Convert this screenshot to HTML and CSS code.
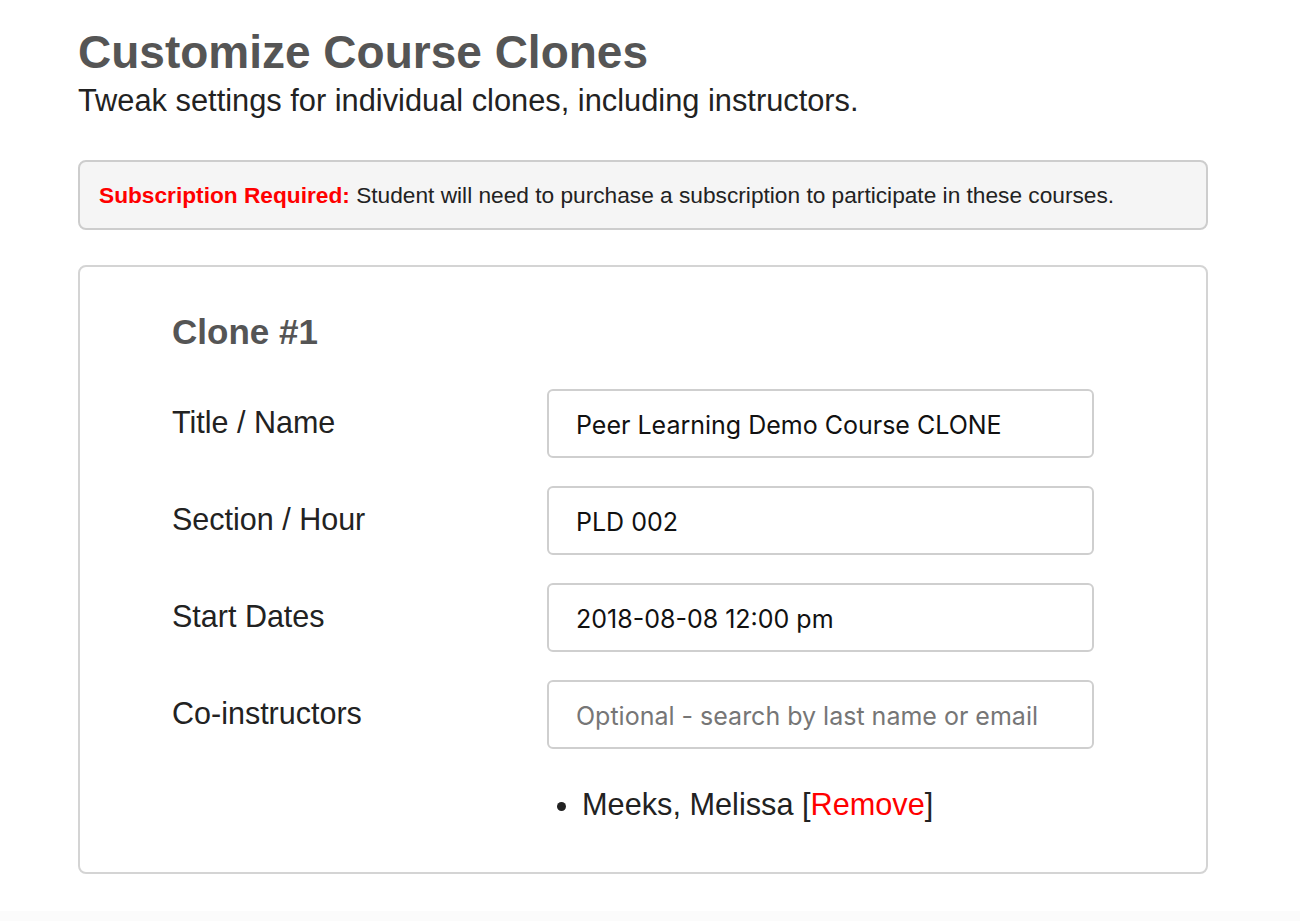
FILE: index.html
```html
<!DOCTYPE html>
<html lang="en">
<head>
    <meta charset="UTF-8">
    <meta name="viewport" content="width=device-width, initial-scale=1.0">
    <title>Customize Course Clones</title>
    <link rel="stylesheet" href="styles.css">
</head>
<body>

    <div class="page">
        <h1>Customize Course Clones</h1>
        <p class="lead">Tweak settings for individual clones, including instructors.</p>

        <div class="notice">
            <strong>Subscription Required:</strong> Student will need to purchase a subscription to participate in these courses.
        </div>

        <div class="clone">
            <h2>Clone #1</h2>

            <div class="row">
                <label for="title">Title / Name</label>
                <input type="text" id="title" value="Peer Learning Demo Course CLONE">
            </div>
            <div class="row">
                <label for="section">Section / Hour</label>
                <input type="text" id="section" value="PLD 002">
            </div>
            <div class="row">
                <label for="start">Start Dates</label>
                <input type="text" id="start" value="2018-08-08 12:00 pm">
            </div>
            <div class="row">
                <label for="coinst">Co-instructors</label>
                <input type="text" id="coinst" placeholder="Optional - search by last name or email">
            </div>

            <ul class="instructors">
                <li>Meeks, Melissa [<a href="#">Remove</a>]</li>
            </ul>
        </div>
    </div>

    <div class="footer"></div>

</body>
</html>
```

FILE: styles.css
```css
body {
    margin: 0;
    font-family: "Liberation Sans", Arial, sans-serif;
    background-color: #fff;
    color: #222;
}
.page {
    width: 1130px;
    padding: 29px 0 0 78px;
}
h1 {
    margin: 0;
    font-size: 46px;
    line-height: 1;
    font-weight: bold;
    color: #555;
}
.lead {
    margin: 11px 0 0;
    font-size: 30.8px;
    line-height: 1;
    color: #222;
}
.notice {
    margin-top: 43px;
    padding: 22px 19px 21px;
    background-color: #f5f5f5;
    border: 2px solid #cdcdcd;
    border-radius: 8px;
    font-size: 22.7px;
    line-height: 1;
    color: #222;
}
.notice strong {
    color: #f00;
}
.clone {
    margin-top: 35px;
    padding: 47px 92px 52px;
    border: 2px solid #d4d4d4;
    border-radius: 8px;
}
.clone h2 {
    margin: 0 0 40px;
    font-size: 35px;
    line-height: 1;
    color: #555;
}
.row {
    display: flex;
    align-items: flex-start;
    margin-bottom: 28px;
}
.row label {
    width: 375px;
    padding-top: 18px;
    font-size: 30.5px;
    line-height: 1;
    color: #222;
}
.row input {
    box-sizing: border-box;
    width: 547px;
    height: 69px;
    margin: 0;
    padding: 3px 27px 0;
    border: 2px solid #cfcfcf;
    border-radius: 6px;
    font-family: Inter, "Noto Sans", sans-serif;
    font-size: 25px;
    color: #111;
    background: #fff;
    outline: none;
}
.row input::placeholder {
    color: #767676;
}
.instructors {
    margin: 41px 0 0 375px;
    padding-left: 35px;
    font-size: 30.7px;
    line-height: 1;
    color: #222;
}
.instructors a {
    color: #f00;
    text-decoration: none;
}
.footer {
    margin-top: 37px;
    height: 10px;
    background-color: #fbfbfb;
}
```
